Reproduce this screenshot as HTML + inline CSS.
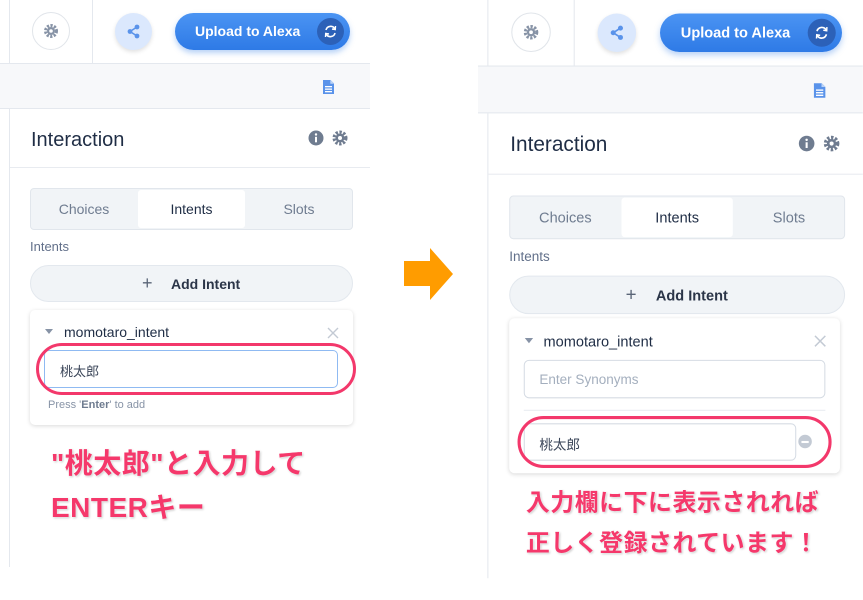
<!DOCTYPE html>
<html><head><meta charset="utf-8">
<style>
*{margin:0;padding:0;box-sizing:border-box}
body{width:863px;height:600px;background:#fff;position:relative;overflow:hidden;font-family:"Liberation Sans","Noto Sans CJK JP",sans-serif}
.p{position:absolute;top:0;width:370px;height:567px;background:#fff}
.a{position:absolute}
.txt{color:#1f2d45}
.pink{position:absolute;font-weight:bold;color:#f5386b;font-size:28px;letter-spacing:0.5px;text-shadow:0 0 2px #fff,1px 1px 2px rgba(0,0,0,.25);font-family:"Liberation Sans","Noto Sans CJK JP",sans-serif;white-space:nowrap}
</style></head><body>

<!-- LEFT PANEL -->
<div class="p" id="L" style="left:0">
 <div class="a" style="left:9px;top:0;width:1px;height:567px;background:#e4e8ee"></div>
 <div class="a" style="left:92px;top:0;width:1px;height:63px;background:#e4e8ee"></div>
 <div class="a" style="left:32px;top:12px;width:38px;height:38px;border-radius:50%;border:1px solid #e1e5ea;background:#fff"></div>
 <svg class="a" style="left:43px;top:23px" width="16" height="16" viewBox="0 0 16 16"><circle cx="8" cy="8" r="5.5" fill="none" stroke="#8793a6" stroke-width="3" stroke-dasharray="2.2 1.4"/><circle cx="8" cy="8" r="4" fill="#8793a6"/><circle cx="8" cy="8" r="1.8" fill="#fff"/></svg>
 <div class="a" style="left:115px;top:13px;width:37px;height:37px;border-radius:50%;background:#dbe8fd;box-shadow:0 2px 4px rgba(0,0,0,.12)"></div>
 <svg class="a" style="left:125px;top:23px" width="17" height="17" viewBox="0 0 17 17"><path d="M12 4 L5 8.5 L12 13" stroke="#5a93ea" stroke-width="1.6" fill="none"/><circle cx="12" cy="4" r="2.4" fill="#5a93ea"/><circle cx="5" cy="8.5" r="2.4" fill="#5a93ea"/><circle cx="12" cy="13" r="2.4" fill="#5a93ea"/></svg>
 <div class="a" style="left:175px;top:13px;width:175px;height:37px;border-radius:19px;background:linear-gradient(#4b94f3,#2e7ae6);box-shadow:0 3px 6px rgba(46,122,230,.35);color:#fff;font-size:14px;font-weight:bold;line-height:37px;padding-left:20px">Upload to Alexa</div>
 <div class="a" style="left:317px;top:18px;width:27px;height:27px;border-radius:50%;background:#2c61b8"></div>
 <svg class="a" style="left:323px;top:24px" width="15" height="15" viewBox="0 0 15 15"><path d="M3 6 A4.7 4.7 0 0 1 11.8 5" stroke="#fff" stroke-width="1.6" fill="none"/><path d="M12 9 A4.7 4.7 0 0 1 3.2 10" stroke="#fff" stroke-width="1.6" fill="none"/><path d="M12.5 2 L12.3 5.6 L9 5" stroke="#fff" stroke-width="1.4" fill="none"/><path d="M2.5 13 L2.7 9.4 L6 10" stroke="#fff" stroke-width="1.4" fill="none"/></svg>
 <div class="a" style="left:0;top:63px;width:370px;height:46px;background:#f7f8fa;border-top:1px solid #e4e8ee;border-bottom:1px solid #e4e8ee"></div>
 <svg class="a" style="left:322px;top:79px" width="13" height="16" viewBox="0 0 13 16"><path d="M1 1 H8.5 L12 4.5 V15 H1 Z" fill="#5a93ea"/><rect x="3" y="7" width="7" height="1.3" fill="#fff"/><rect x="3" y="9.5" width="7" height="1.3" fill="#fff"/><rect x="3" y="12" width="7" height="1.3" fill="#fff"/><path d="M8.3 1 V4.7 H12" fill="#bcd4f7"/></svg>
 <div class="a" style="left:9px;top:110px;width:1px;height:457px;background:#e4e8ee"></div>
 <div class="a txt" style="left:31px;top:129px;font-size:20px">Interaction</div>
 <svg class="a" style="left:308px;top:130px" width="16" height="16" viewBox="0 0 16 16"><circle cx="8" cy="8" r="7.5" fill="#6f7c90"/><rect x="7" y="6.8" width="2" height="5.5" fill="#fff"/><circle cx="8" cy="4.5" r="1.2" fill="#fff"/></svg>
 <svg class="a" style="left:332px;top:130px" width="16" height="16" viewBox="0 0 16 16"><circle cx="8" cy="8" r="5.8" fill="none" stroke="#6f7c90" stroke-width="3.4" stroke-dasharray="2.3 1.5"/><circle cx="8" cy="8" r="4.5" fill="#6f7c90"/><circle cx="8" cy="8" r="2" fill="#fff"/></svg>
 <div class="a" style="left:10px;top:167px;width:360px;height:1px;background:#e8ebf0"></div>
 <div class="a" style="left:30px;top:188px;width:323px;height:42px;background:#f1f4f7;border:1px solid #e1e6ec;border-radius:4px"></div>
 <div class="a" style="left:138px;top:190px;width:107px;height:38px;background:#fff;border-radius:3px"></div>
 <div class="a" style="left:30px;top:201px;width:108px;text-align:center;font-size:14px;color:#6f7c90">Choices</div>
 <div class="a txt" style="left:138px;top:201px;width:107px;text-align:center;font-size:14px">Intents</div>
 <div class="a" style="left:245px;top:201px;width:108px;text-align:center;font-size:14px;color:#6f7c90">Slots</div>
 <div class="a" style="left:30px;top:239px;font-size:13px;color:#62708a">Intents</div>
 <div class="a" style="left:30px;top:265px;width:323px;height:37px;border-radius:19px;background:#f1f4f7;border:1px solid #e3e8ee"></div>
 <div class="a txt" style="left:142px;top:273px;font-size:18px;color:#5a6577;font-weight:300">+</div>
 <div class="a txt" style="left:171px;top:276px;font-size:14px;font-weight:bold;color:#2b3548">Add Intent</div>
 <div class="a" style="left:30px;top:310px;width:323px;height:115px;border-radius:5px;background:#fff;box-shadow:0 1px 4px rgba(0,0,0,.15)"></div>
 <div class="a" style="left:45px;top:329px;width:0;height:0;border-left:4px solid transparent;border-right:4px solid transparent;border-top:5px solid #8793a6"></div>
 <div class="a txt" style="left:64px;top:324px;font-size:14px">momotaro_intent</div>
 <svg class="a" style="left:327px;top:327px" width="12" height="12" viewBox="0 0 12 12"><path d="M1 1 L11 11 M11 1 L1 11" stroke="#c3cad4" stroke-width="1.4"/></svg>
 <div class="a" style="left:44px;top:350px;width:294px;height:38px;border:1px solid #8fbaf2;border-radius:5px;background:#fff"></div>
 <div class="a txt" style="left:60px;top:361px;font-size:13px;color:#3a4558">桃太郎</div>
 <div class="a" style="left:36px;top:343px;width:320px;height:52px;border:3px solid #f3386b;border-radius:26px"></div>
 <div class="a" style="left:48px;top:399px;font-size:11px;color:#8793a6">Press '<b style="color:#6f7c90">Enter</b>' to add</div>
 <div class="pink" style="left:51px;top:442px">"桃太郎"と入力して</div>
 <div class="pink" style="left:51px;top:486px">ENTERキー</div>
</div>

<!-- ARROW -->
<svg class="a" style="left:404px;top:248px" width="50" height="53" viewBox="0 0 50 53"><path d="M0 13 H26 V0 L49 26 L26 52 V38 H0 Z" fill="#ff9c00"/></svg>

<!-- RIGHT PANEL -->
<div class="p" id="R" style="left:478px;transform:scale(1.04);transform-origin:0 0;height:556px">
 <div class="a" style="left:9px;top:0;width:1px;height:556px;background:#e4e8ee"></div>
 <div class="a" style="left:92px;top:0;width:1px;height:63px;background:#e4e8ee"></div>
 <div class="a" style="left:32px;top:12px;width:38px;height:38px;border-radius:50%;border:1px solid #e1e5ea;background:#fff"></div>
 <svg class="a" style="left:43px;top:23px" width="16" height="16" viewBox="0 0 16 16"><circle cx="8" cy="8" r="5.5" fill="none" stroke="#8793a6" stroke-width="3" stroke-dasharray="2.2 1.4"/><circle cx="8" cy="8" r="4" fill="#8793a6"/><circle cx="8" cy="8" r="1.8" fill="#fff"/></svg>
 <div class="a" style="left:115px;top:13px;width:37px;height:37px;border-radius:50%;background:#dbe8fd;box-shadow:0 2px 4px rgba(0,0,0,.12)"></div>
 <svg class="a" style="left:125px;top:23px" width="17" height="17" viewBox="0 0 17 17"><path d="M12 4 L5 8.5 L12 13" stroke="#5a93ea" stroke-width="1.6" fill="none"/><circle cx="12" cy="4" r="2.4" fill="#5a93ea"/><circle cx="5" cy="8.5" r="2.4" fill="#5a93ea"/><circle cx="12" cy="13" r="2.4" fill="#5a93ea"/></svg>
 <div class="a" style="left:175px;top:13px;width:175px;height:37px;border-radius:19px;background:linear-gradient(#4b94f3,#2e7ae6);box-shadow:0 3px 6px rgba(46,122,230,.35);color:#fff;font-size:14px;font-weight:bold;line-height:37px;padding-left:20px">Upload to Alexa</div>
 <div class="a" style="left:317px;top:18px;width:27px;height:27px;border-radius:50%;background:#2c61b8"></div>
 <svg class="a" style="left:323px;top:24px" width="15" height="15" viewBox="0 0 15 15"><path d="M3 6 A4.7 4.7 0 0 1 11.8 5" stroke="#fff" stroke-width="1.6" fill="none"/><path d="M12 9 A4.7 4.7 0 0 1 3.2 10" stroke="#fff" stroke-width="1.6" fill="none"/><path d="M12.5 2 L12.3 5.6 L9 5" stroke="#fff" stroke-width="1.4" fill="none"/><path d="M2.5 13 L2.7 9.4 L6 10" stroke="#fff" stroke-width="1.4" fill="none"/></svg>
 <div class="a" style="left:0;top:63px;width:370px;height:46px;background:#f7f8fa;border-top:1px solid #e4e8ee;border-bottom:1px solid #e4e8ee"></div>
 <svg class="a" style="left:322px;top:79px" width="13" height="16" viewBox="0 0 13 16"><path d="M1 1 H8.5 L12 4.5 V15 H1 Z" fill="#5a93ea"/><rect x="3" y="7" width="7" height="1.3" fill="#fff"/><rect x="3" y="9.5" width="7" height="1.3" fill="#fff"/><rect x="3" y="12" width="7" height="1.3" fill="#fff"/><path d="M8.3 1 V4.7 H12" fill="#bcd4f7"/></svg>
 <div class="a txt" style="left:31px;top:128px;font-size:20px">Interaction</div>
 <svg class="a" style="left:308px;top:130px" width="16" height="16" viewBox="0 0 16 16"><circle cx="8" cy="8" r="7.5" fill="#6f7c90"/><rect x="7" y="6.8" width="2" height="5.5" fill="#fff"/><circle cx="8" cy="4.5" r="1.2" fill="#fff"/></svg>
 <svg class="a" style="left:332px;top:130px" width="16" height="16" viewBox="0 0 16 16"><circle cx="8" cy="8" r="5.8" fill="none" stroke="#6f7c90" stroke-width="3.4" stroke-dasharray="2.3 1.5"/><circle cx="8" cy="8" r="4.5" fill="#6f7c90"/><circle cx="8" cy="8" r="2" fill="#fff"/></svg>
 <div class="a" style="left:10px;top:167px;width:360px;height:1px;background:#e8ebf0"></div>
 <div class="a" style="left:30px;top:188px;width:323px;height:42px;background:#f1f4f7;border:1px solid #e1e6ec;border-radius:4px"></div>
 <div class="a" style="left:138px;top:190px;width:107px;height:38px;background:#fff;border-radius:3px"></div>
 <div class="a" style="left:30px;top:201px;width:108px;text-align:center;font-size:14px;color:#6f7c90">Choices</div>
 <div class="a txt" style="left:138px;top:201px;width:107px;text-align:center;font-size:14px">Intents</div>
 <div class="a" style="left:245px;top:201px;width:108px;text-align:center;font-size:14px;color:#6f7c90">Slots</div>
 <div class="a" style="left:30px;top:239px;font-size:13px;color:#62708a">Intents</div>
 <div class="a" style="left:30px;top:265px;width:323px;height:37px;border-radius:19px;background:#f1f4f7;border:1px solid #e3e8ee"></div>
 <div class="a txt" style="left:142px;top:273px;font-size:18px;color:#5a6577;font-weight:300">+</div>
 <div class="a txt" style="left:171px;top:276px;font-size:14px;font-weight:bold;color:#2b3548">Add Intent</div>
 <div class="a" style="left:30px;top:306px;width:318px;height:149px;border-radius:5px;background:#fff;box-shadow:0 1px 4px rgba(0,0,0,.15)"></div>
 <div class="a" style="left:45px;top:325px;width:0;height:0;border-left:4px solid transparent;border-right:4px solid transparent;border-top:5px solid #8793a6"></div>
 <div class="a txt" style="left:63px;top:320px;font-size:14px">momotaro_intent</div>
 <svg class="a" style="left:323px;top:322px" width="12" height="12" viewBox="0 0 12 12"><path d="M1 1 L11 11 M11 1 L1 11" stroke="#c3cad4" stroke-width="1.4"/></svg>
 <div class="a" style="left:44px;top:346px;width:290px;height:37px;border:1px solid #d6dce4;border-radius:5px;background:#fff"></div>
 <div class="a" style="left:59px;top:357px;font-size:13px;color:#a4afbe">Enter Synonyms</div>
 <div class="a" style="left:44px;top:394px;width:290px;height:1px;background:#e8ebf0"></div>
 <div class="a" style="left:44px;top:407px;width:262px;height:36px;border:1px solid #d6dce4;border-radius:5px;background:#fff"></div>
 <div class="a txt" style="left:59px;top:417px;font-size:13px;color:#3a4558">桃太郎</div>
 <div class="a" style="left:308px;top:418px;width:13px;height:13px;border-radius:50%;background:#c3cad4"></div>
 <div class="a" style="left:311px;top:424px;width:7px;height:2px;background:#fff"></div>
 <div class="a" style="left:38px;top:400px;width:302px;height:50px;border:3px solid #f3386b;border-radius:25px"></div>
 <div class="pink" style="left:46px;top:464px;font-size:23px">入力欄に下に表示されれば</div>
 <div class="pink" style="left:46px;top:503px;font-size:23px">正しく登録されています！</div>
</div>

</body></html>
